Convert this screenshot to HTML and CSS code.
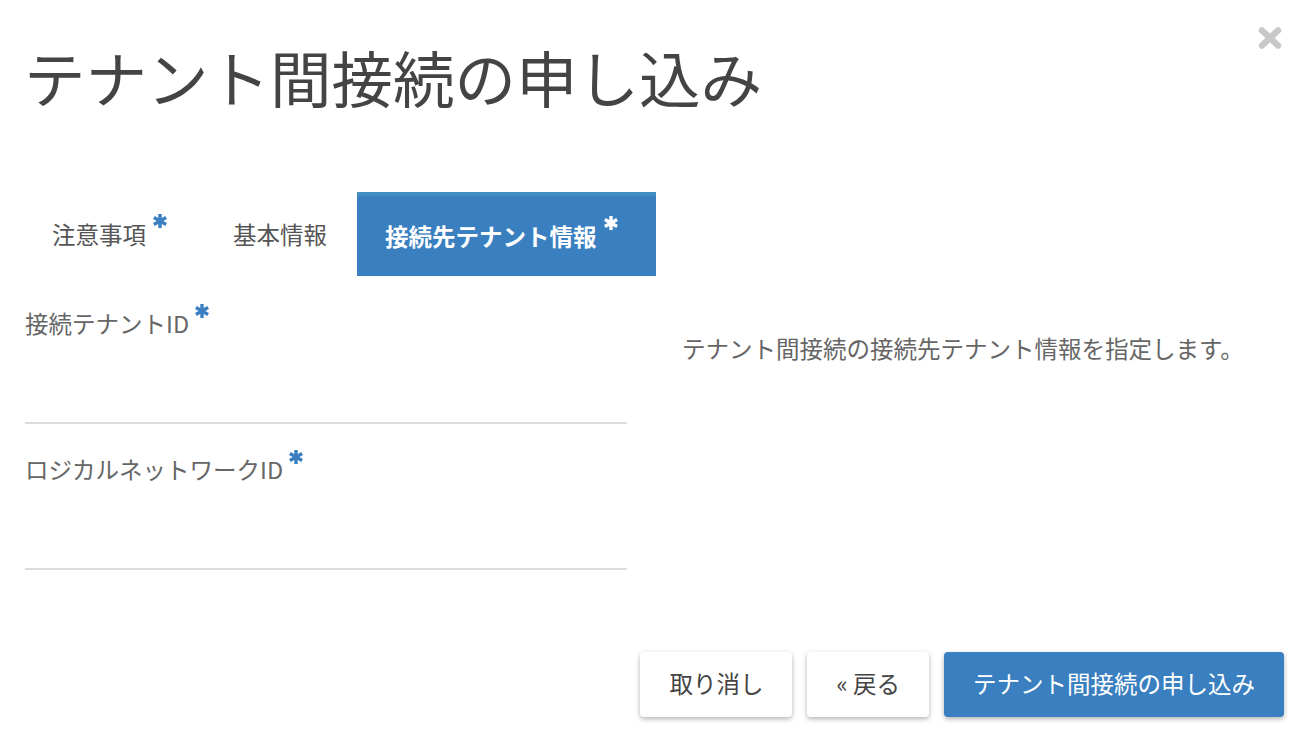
FILE: index.html
```html
<!DOCTYPE html>
<html lang="ja">
<head>
<meta charset="utf-8">
<title>テナント間接続の申し込み</title>
<link rel="stylesheet" href="styles.css">
</head>
<body>
<div class="modal">
  <button class="close" aria-label="閉じる">
    <svg width="24" height="22" viewBox="0 0 24 22"><path d="M4 3.5 L20 18.5 M20 3.5 L4 18.5" stroke="#c8c8c8" stroke-width="6.5" stroke-linecap="round" fill="none"/></svg>
  </button>
  <h1 class="title">テナント間接続の申し込み</h1>

  <div class="tabs">
    <div class="tab">注意事項<span class="req"><svg viewBox="0 0 16 16" width="16" height="16"><path d="M8 1 V15 M1.9 4.5 L14.1 11.5 M14.1 4.5 L1.9 11.5" stroke="currentColor" stroke-width="3.4" fill="none"/></svg></span></div>
    <div class="tab">基本情報</div>
    <div class="tab active">接続先テナント情報<span class="req"><svg viewBox="0 0 16 16" width="16" height="16"><path d="M8 1 V15 M1.9 4.5 L14.1 11.5 M14.1 4.5 L1.9 11.5" stroke="currentColor" stroke-width="3.4" fill="none"/></svg></span></div>
  </div>

  <div class="content">
    <div class="form">
      <div class="field">
        <label class="label">接続テナントID<span class="req"><svg viewBox="0 0 16 16" width="16" height="16"><path d="M8 1 V15 M1.9 4.5 L14.1 11.5 M14.1 4.5 L1.9 11.5" stroke="currentColor" stroke-width="3.4" fill="none"/></svg></span></label>
        <div class="input"></div>
      </div>
      <div class="field">
        <label class="label">ロジカルネットワークID<span class="req"><svg viewBox="0 0 16 16" width="16" height="16"><path d="M8 1 V15 M1.9 4.5 L14.1 11.5 M14.1 4.5 L1.9 11.5" stroke="currentColor" stroke-width="3.4" fill="none"/></svg></span></label>
        <div class="input"></div>
      </div>
    </div>
    <div class="help">
      <p>テナント間接続の接続先テナント情報を指定します。</p>
    </div>
  </div>

  <div class="actions">
    <button class="btn">取り消し</button>
    <button class="btn">« 戻る</button>
    <button class="btn primary">テナント間接続の申し込み</button>
  </div>
</div>
</body>
</html>
```

FILE: styles.css
```css
* { box-sizing: border-box; }
html, body {
  margin: 0;
  padding: 0;
  background: #fff;
}
body {
  font-family: "Noto Sans CJK JP", "Noto Sans", sans-serif;
  color: #555;
  width: 1302px;
  height: 740px;
  overflow: hidden;
}
.modal {
  position: relative;
  padding: 0 18px 0 25px;
  display: flex;
  flex-direction: column;
}
.close {
  position: absolute;
  top: 27px;
  right: 20px;
  border: 0;
  padding: 0;
  background: none;
  line-height: 0;
}
.title {
  margin: 46px 0 0 0;
  font-size: 61.5px;
  line-height: 61px;
  font-weight: 400;
  color: #444;
  margin-left: -1px;
}
.tabs {
  display: flex;
  margin-top: 85px;
  margin-left: -1px;
  height: 84px;
}
.tab {
  display: flex;
  align-items: center;
  padding: 0 30px 0 28px;
  font-size: 23.5px;
  color: #555;
  height: 84px;
}
.tab .req {
  margin-left: 6px;
  margin-right: 7px;
  margin-top: -26px;
  color: #3a7fc1;
  line-height: 0;
}
.tab.active {
  background: #3a7fc0;
  border-top: 4px solid #3f8fc0;
  color: #fff;
  font-weight: 700;
}
.tab.active .req { color: #fff; }
.content {
  display: flex;
}
.form {
  width: 602px;
  flex: none;
}
.field {
  height: 146px;
  display: flex;
  flex-direction: column;
}
.label {
  display: flex;
  align-items: flex-start;
  margin-top: 33px;
  font-size: 23.5px;
  line-height: 28px;
  color: #666;
}
.label .req {
  color: #3a7fc1;
  margin-left: 5px;
  margin-top: -6px;
  line-height: 0;
}
.input {
  margin-top: 85px;
  border-bottom: 2px solid #ddd;
}
.help {
  margin-left: 55px;
  font-size: 23.5px;
  color: #666;
}
.help p {
  margin: 58px 0 0 0;
  line-height: 28px;
}
.actions {
  display: flex;
  justify-content: flex-end;
  gap: 15px;
  margin-top: 84px;
}
.btn {
  font-family: "Noto Sans CJK JP", "Noto Sans", sans-serif;
  font-size: 23.5px;
  height: 65px;
  padding: 0 29px 3px;
  border: 0;
  border-radius: 4px;
  background: #fff;
  color: #444;
  box-shadow: 0 2px 5px rgba(0, 0, 0, 0.3);
}
.btn.primary {
  background: #3a7fc0;
  color: #fff;
}
```
